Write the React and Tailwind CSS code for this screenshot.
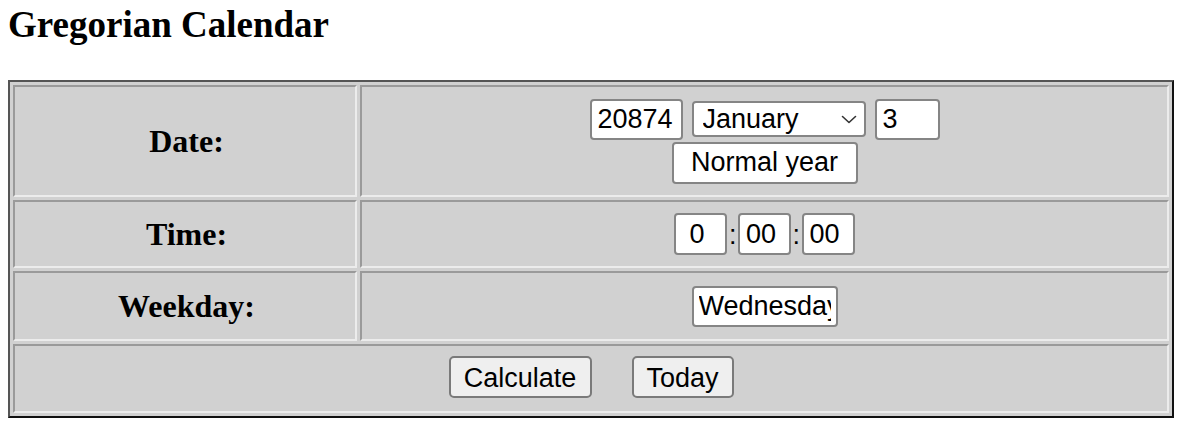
const months = [
  "January", "February", "March", "April", "May", "June",
  "July", "August", "September", "October", "November", "December",
];

const field =
  "h-[41px] rounded-[4px] border-2 border-[#858585] bg-white text-[27px] text-black outline-none";

const cell =
  "border-2 border-t-[#9a9a9a] border-l-[#9a9a9a] border-b-[#ececec] border-r-[#ececec] bg-[#d1d1d1] p-0 align-middle";

const label = "text-center text-[32px] font-bold";

const App = () => {
  return (
    <div className="min-h-screen bg-white px-[8px] font-['Liberation_Serif','Times_New_Roman',serif] text-black">
      <h1 className="pt-[6px] text-[37px] font-bold leading-[37px]">Gregorian Calendar</h1>

      <table className="mt-[37px] w-[1166px] border-separate border-spacing-[3px] border-2 border-t-[#555] border-l-[#555] border-b-[#111] border-r-[#111] bg-[#d1d1d1]">
        <tbody>
          <tr>
            <td className={`${cell} ${label} h-[112px] w-[344px] pl-[3px]`}>Date:</td>
            <td className={`${cell} h-[112px]`}>
              <div className="flex flex-col items-center font-['Liberation_Sans',Arial,sans-serif]">
                <div className="flex items-center gap-[9px]">
                  <input className={`${field} w-[93px] px-[6px]`} defaultValue="20874" />
                  <div className="relative">
                    <select
                      className="h-[36px] w-[174px] appearance-none rounded-[4px] border-2 border-[#858585] bg-white pl-[9px] text-[27px] leading-[30px] outline-none"
                      defaultValue="January"
                    >
                      {months.map((m) => (
                        <option key={m}>{m}</option>
                      ))}
                    </select>
                    <svg
                      className="pointer-events-none absolute right-[9px] top-[14px] h-[9px] w-[16px]"
                      viewBox="0 0 16 9"
                      fill="none"
                      stroke="#333"
                      strokeWidth="1.6"
                    >
                      <path d="M1.5 1.5 8 7.5l6.5-6" strokeLinecap="round" strokeLinejoin="round" />
                    </svg>
                  </div>
                  <input className={`${field} w-[65px] px-[6px]`} defaultValue="3" />
                </div>
                <input
                  className={`${field} mt-[2px] h-[42px] w-[186px] text-center`}
                  defaultValue="Normal year"
                  readOnly
                />
              </div>
            </td>
          </tr>

          <tr>
            <td className={`${cell} ${label} h-[68px] pl-[3px]`}>Time:</td>
            <td className={`${cell} h-[68px]`}>
              <div className="flex items-center justify-center font-['Liberation_Sans',Arial,sans-serif] text-[27px]">
                <input className={`${field} h-[42px] w-[53px] pl-[13px]`} defaultValue="0" />
                <span className="mx-[1.5px] pt-[3px] leading-none">:</span>
                <input className={`${field} h-[42px] w-[53px] px-[6px]`} defaultValue="00" />
                <span className="mx-[1.5px] pt-[3px] leading-none">:</span>
                <input className={`${field} h-[42px] w-[53px] px-[6px]`} defaultValue="00" />
              </div>
            </td>
          </tr>

          <tr>
            <td className={`${cell} ${label} h-[70px] pl-[3px]`}>Weekday:</td>
            <td className={`${cell} h-[70px]`}>
              <div className="flex justify-center font-['Liberation_Sans',Arial,sans-serif]">
                <input className={`${field} w-[146px] px-[5px]`} defaultValue="Wednesday" readOnly />
              </div>
            </td>
          </tr>

          <tr>
            <td colSpan={2} className={`${cell} h-[69px]`}>
              <div className="flex justify-center gap-[40px] pb-[3px] font-['Liberation_Sans',Arial,sans-serif]">
                <button className="h-[42px] w-[143px] rounded-[5px] border-2 border-[#7a7a7a] bg-[#efefef] text-[27px]">
                  Calculate
                </button>
                <button className="h-[42px] w-[102px] rounded-[5px] border-2 border-[#7a7a7a] bg-[#efefef] text-[27px]">
                  Today
                </button>
              </div>
            </td>
          </tr>
        </tbody>
      </table>
    </div>
  );
};

export default App;
